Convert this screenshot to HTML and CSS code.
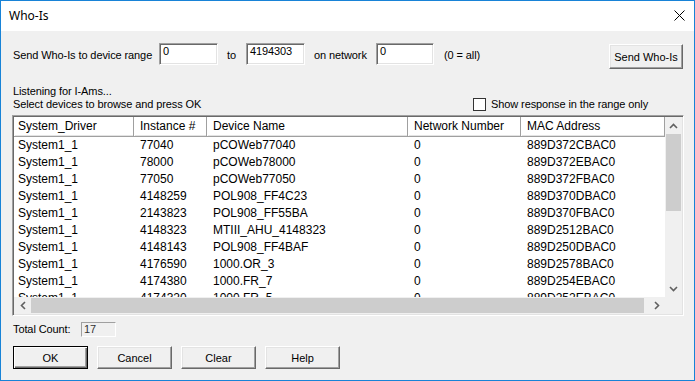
FILE: index.html
```html
<!DOCTYPE html>
<html lang="en">
<head>
    <meta charset="UTF-8">
    <title>Who-Is</title>
    <link rel="stylesheet" href="styles.css">
</head>
<body>
    <div class="window">
        <div class="titlebar">
            <span class="title">Who-Is</span>
            <svg class="close" width="11" height="11" viewBox="0 0 11 11">
                <path d="M0.5 0.5 L10.5 10.5 M10.5 0.5 L0.5 10.5" stroke="#000" stroke-width="1" fill="none"/>
            </svg>
        </div>

        <div class="client">
            <div class="range-row">
                <span class="lbl lbl-range">Send Who-Is to device range</span>
                <span class="edit edit-wide">0</span>
                <span class="lbl lbl-to">to</span>
                <span class="edit edit-wide">4194303</span>
                <span class="lbl lbl-net">on network</span>
                <span class="edit edit-net">0</span>
                <span class="lbl lbl-all">(0 = all)</span>
                <button class="btn btn-send">Send Who-Is</button>
            </div>

            <div class="hint">Listening for I-Ams...</div>
            <div class="hint-row">
                <span class="hint-text">Select devices to browse and press OK</span>
                <span class="check"><span class="check-box"></span>Show response in the range only</span>
            </div>

            <div class="listview">
                <div class="lv-main">
                    <div class="lv-header">
                        <span class="col c1">System_Driver</span>
                        <span class="col c2">Instance #</span>
                        <span class="col c3">Device Name</span>
                        <span class="col c4">Network Number</span>
                        <span class="col c5">MAC Address</span>
                    </div>
                    <div class="lv-body" id="lv-body"></div>
                </div>
                <div class="vscroll">
                    <span class="arrow">
                        <svg width="9" height="6" viewBox="0 0 9 6"><path d="M1 5 L4.5 1.5 L8 5" stroke="#606060" stroke-width="1.6" fill="none"/></svg>
                    </span>
                    <span class="vtrack"><span class="vthumb"></span></span>
                    <span class="arrow">
                        <svg width="9" height="6" viewBox="0 0 9 6"><path d="M1 1 L4.5 4.5 L8 1" stroke="#606060" stroke-width="1.6" fill="none"/></svg>
                    </span>
                </div>
                <div class="hscroll">
                    <span class="arrow">
                        <svg width="6" height="9" viewBox="0 0 6 9"><path d="M5 1 L1.5 4.5 L5 8" stroke="#606060" stroke-width="1.6" fill="none"/></svg>
                    </span>
                    <span class="htrack"><span class="hthumb"></span></span>
                    <span class="arrow">
                        <svg width="6" height="9" viewBox="0 0 6 9"><path d="M1 1 L4.5 4.5 L1 8" stroke="#606060" stroke-width="1.6" fill="none"/></svg>
                    </span>
                </div>
                <div class="corner"></div>
            </div>

            <div class="count-row">
                <span class="lbl lbl-count">Total Count:</span>
                <span class="count-box">17</span>
            </div>

            <div class="button-row">
                <button class="btn btn-default">OK</button>
                <button class="btn">Cancel</button>
                <button class="btn">Clear</button>
                <button class="btn">Help</button>
            </div>
        </div>
    </div>

    <script>
        // devices that answered the Who-Is
        const devices = [
            ['System1_1', '77040', 'pCOWeb77040', '0', '889D372CBAC0'],
            ['System1_1', '78000', 'pCOWeb78000', '0', '889D372EBAC0'],
            ['System1_1', '77050', 'pCOWeb77050', '0', '889D372FBAC0'],
            ['System1_1', '4148259', 'POL908_FF4C23', '0', '889D370DBAC0'],
            ['System1_1', '2143823', 'POL908_FF55BA', '0', '889D370FBAC0'],
            ['System1_1', '4148323', 'MTIII_AHU_4148323', '0', '889D2512BAC0'],
            ['System1_1', '4148143', 'POL908_FF4BAF', '0', '889D250DBAC0'],
            ['System1_1', '4176590', '1000.OR_3', '0', '889D2578BAC0'],
            ['System1_1', '4174380', '1000.FR_7', '0', '889D254EBAC0'],
            ['System1_1', '4174320', '1000.FR_5', '0', '889D252EBAC0'],
        ];

        const body = document.getElementById('lv-body');
        devices.forEach(device => {
            const row = document.createElement('div');
            row.classList.add('lv-row');
            device.forEach((value, i) => {
                const cell = document.createElement('span');
                cell.classList.add('col', 'c' + (i + 1));
                cell.textContent = value;
                row.appendChild(cell);
            });
            body.appendChild(row);
        });
    </script>
</body>
</html>
```

FILE: styles.css
```css
body {
    margin: 0;
    padding: 0;
    overflow: hidden;
    font-family: 'Liberation Sans', Arial, sans-serif;
    font-size: 11px;
    color: #000;
}

.window {
    width: 695px;
    height: 381px;
    box-sizing: border-box;
    border: 1px solid #1883d7;
    background-color: #f0f0f0;
    display: flex;
    flex-direction: column;
}

.titlebar {
    height: 30px;
    background-color: #fff;
    display: flex;
    align-items: center;
    justify-content: space-between;
    padding: 0 9px 0 8px;
    flex-shrink: 0;
}

.title {
    font-family: 'Noto Sans', sans-serif;
    font-size: 12px;
    margin-top: -1px;
}

.close {
    display: block;
    margin-top: -1px;
}

.client {
    padding: 0 10px 0 11px;
    letter-spacing: -0.1px;
}

.lbl {
    line-height: 13px;
    white-space: nowrap;
}

/* top row */
.range-row {
    display: flex;
    align-items: flex-start;
    margin-top: 12px;
    height: 26px;
}

.range-row .lbl {
    margin-top: 6px;
}

.lbl-range {
    width: 146px;
    padding-left: 1px;
}

.lbl-to {
    width: 19px;
    padding-left: 9px;
}

.lbl-net {
    width: 62px;
    padding-left: 9px;
}

.lbl-all {
    padding-left: 10px;
}

.edit {
    box-sizing: border-box;
    height: 22px;
    background-color: #fff;
    border: 1px solid;
    border-color: #a0a0a0 #fff #fff #a0a0a0;
    box-shadow: inset 1px 1px 0 #696969, inset -1px -1px 0 #e3e3e3;
    padding: 1px 3px;
    line-height: 13px;
}

.edit-wide {
    width: 59px;
}

.edit-net {
    width: 58px;
}

.btn {
    font-family: 'Liberation Sans', Arial, sans-serif;
    font-size: 11px;
    color: #000;
    box-sizing: border-box;
    width: 75px;
    height: 23px;
    padding: 0;
    background-color: #f0f0f0;
    border: 1px solid;
    border-color: #fff #696969 #696969 #fff;
    box-shadow: inset -1px -1px 0 #a0a0a0, inset 1px 1px 0 #e3e3e3;
}

.btn-send {
    width: 74px;
    height: 25px;
    margin-left: auto;
    margin-top: 1px;
    margin-right: 1px;
}

.btn-default {
    border-color: #000;
    box-shadow: inset 1px 1px 0 #fff, inset -1px -1px 0 #696969, inset -2px -2px 0 #a0a0a0;
}

/* hint lines */
.hint {
    margin-top: 16px;
    padding-left: 1px;
    line-height: 13px;
}

.hint-row {
    display: flex;
    line-height: 13px;
    height: 13px;
}

.hint-text {
    width: 460px;
    padding-left: 1px;
}

.check {
    display: flex;
    align-items: center;
}

.check-box {
    box-sizing: border-box;
    width: 13px;
    height: 13px;
    background-color: #fff;
    border: 1px solid #333;
    margin-right: 5px;
}

/* list view */
.listview {
    box-sizing: border-box;
    margin-top: 4px;
    width: 672px;
    height: 201px;
    background-color: #fff;
    border: 1px solid;
    border-color: #a0a0a0 #fff #fff #a0a0a0;
    box-shadow: inset 1px 1px 0 #696969, inset -1px -1px 0 #e3e3e3;
    padding: 1px;
    display: grid;
    grid-template-columns: 1fr 17px;
    grid-template-rows: 1fr 17px;
    font-size: 12px;
    letter-spacing: 0;
}

.lv-main {
    overflow: hidden;
}

.lv-header,
.lv-row {
    display: grid;
    grid-template-columns: 120px 73px 201px 113px 144px;
}

.lv-header .col {
    box-sizing: border-box;
    height: 20px;
    line-height: 19px;
    border-right: 1px solid #a0a0a0;
    border-bottom: 1px solid #a0a0a0;
    box-shadow: inset 1px 1px 0 #fff, inset 0 -1px 0 #e3e3e3;
}

.lv-header {
    background-color: #fff;
}

.col {
    padding-left: 6px;
    white-space: nowrap;
    overflow: hidden;
}

.col.c1 {
    padding-left: 4px;
}

.lv-body {
    height: 160px;
    overflow: hidden;
}

.lv-row {
    height: 17px;
    line-height: 17px;
}

/* scroll bars */
.vscroll {
    display: flex;
    flex-direction: column;
    background-color: #f0f0f0;
}

.hscroll {
    display: flex;
    background-color: #f0f0f0;
}

.arrow {
    width: 17px;
    height: 17px;
    display: flex;
    align-items: center;
    justify-content: center;
    flex-shrink: 0;
}

.vtrack {
    flex: 1;
    display: flex;
    flex-direction: column;
}

.vthumb {
    height: 77px;
    margin: 0 1px;
    background-color: #cdcdcd;
}

.htrack {
    flex: 1;
    display: flex;
}

.hthumb {
    width: 613px;
    margin: 1px 0;
    background-color: #cdcdcd;
}

.corner {
    background-color: #f0f0f0;
}

/* bottom */
.count-row {
    display: flex;
    align-items: center;
    margin-top: 6px;
    height: 15px;
    padding-left: 1px;
}

.lbl-count {
    width: 68px;
}

.count-box {
    box-sizing: border-box;
    width: 35px;
    height: 15px;
    border: 1px solid;
    border-color: #a0a0a0 #fff #fff #a0a0a0;
    padding-left: 2px;
    line-height: 13px;
    color: #333;
}

.button-row {
    display: flex;
    gap: 9px;
    margin-top: 9px;
    padding-left: 1px;
}
```
